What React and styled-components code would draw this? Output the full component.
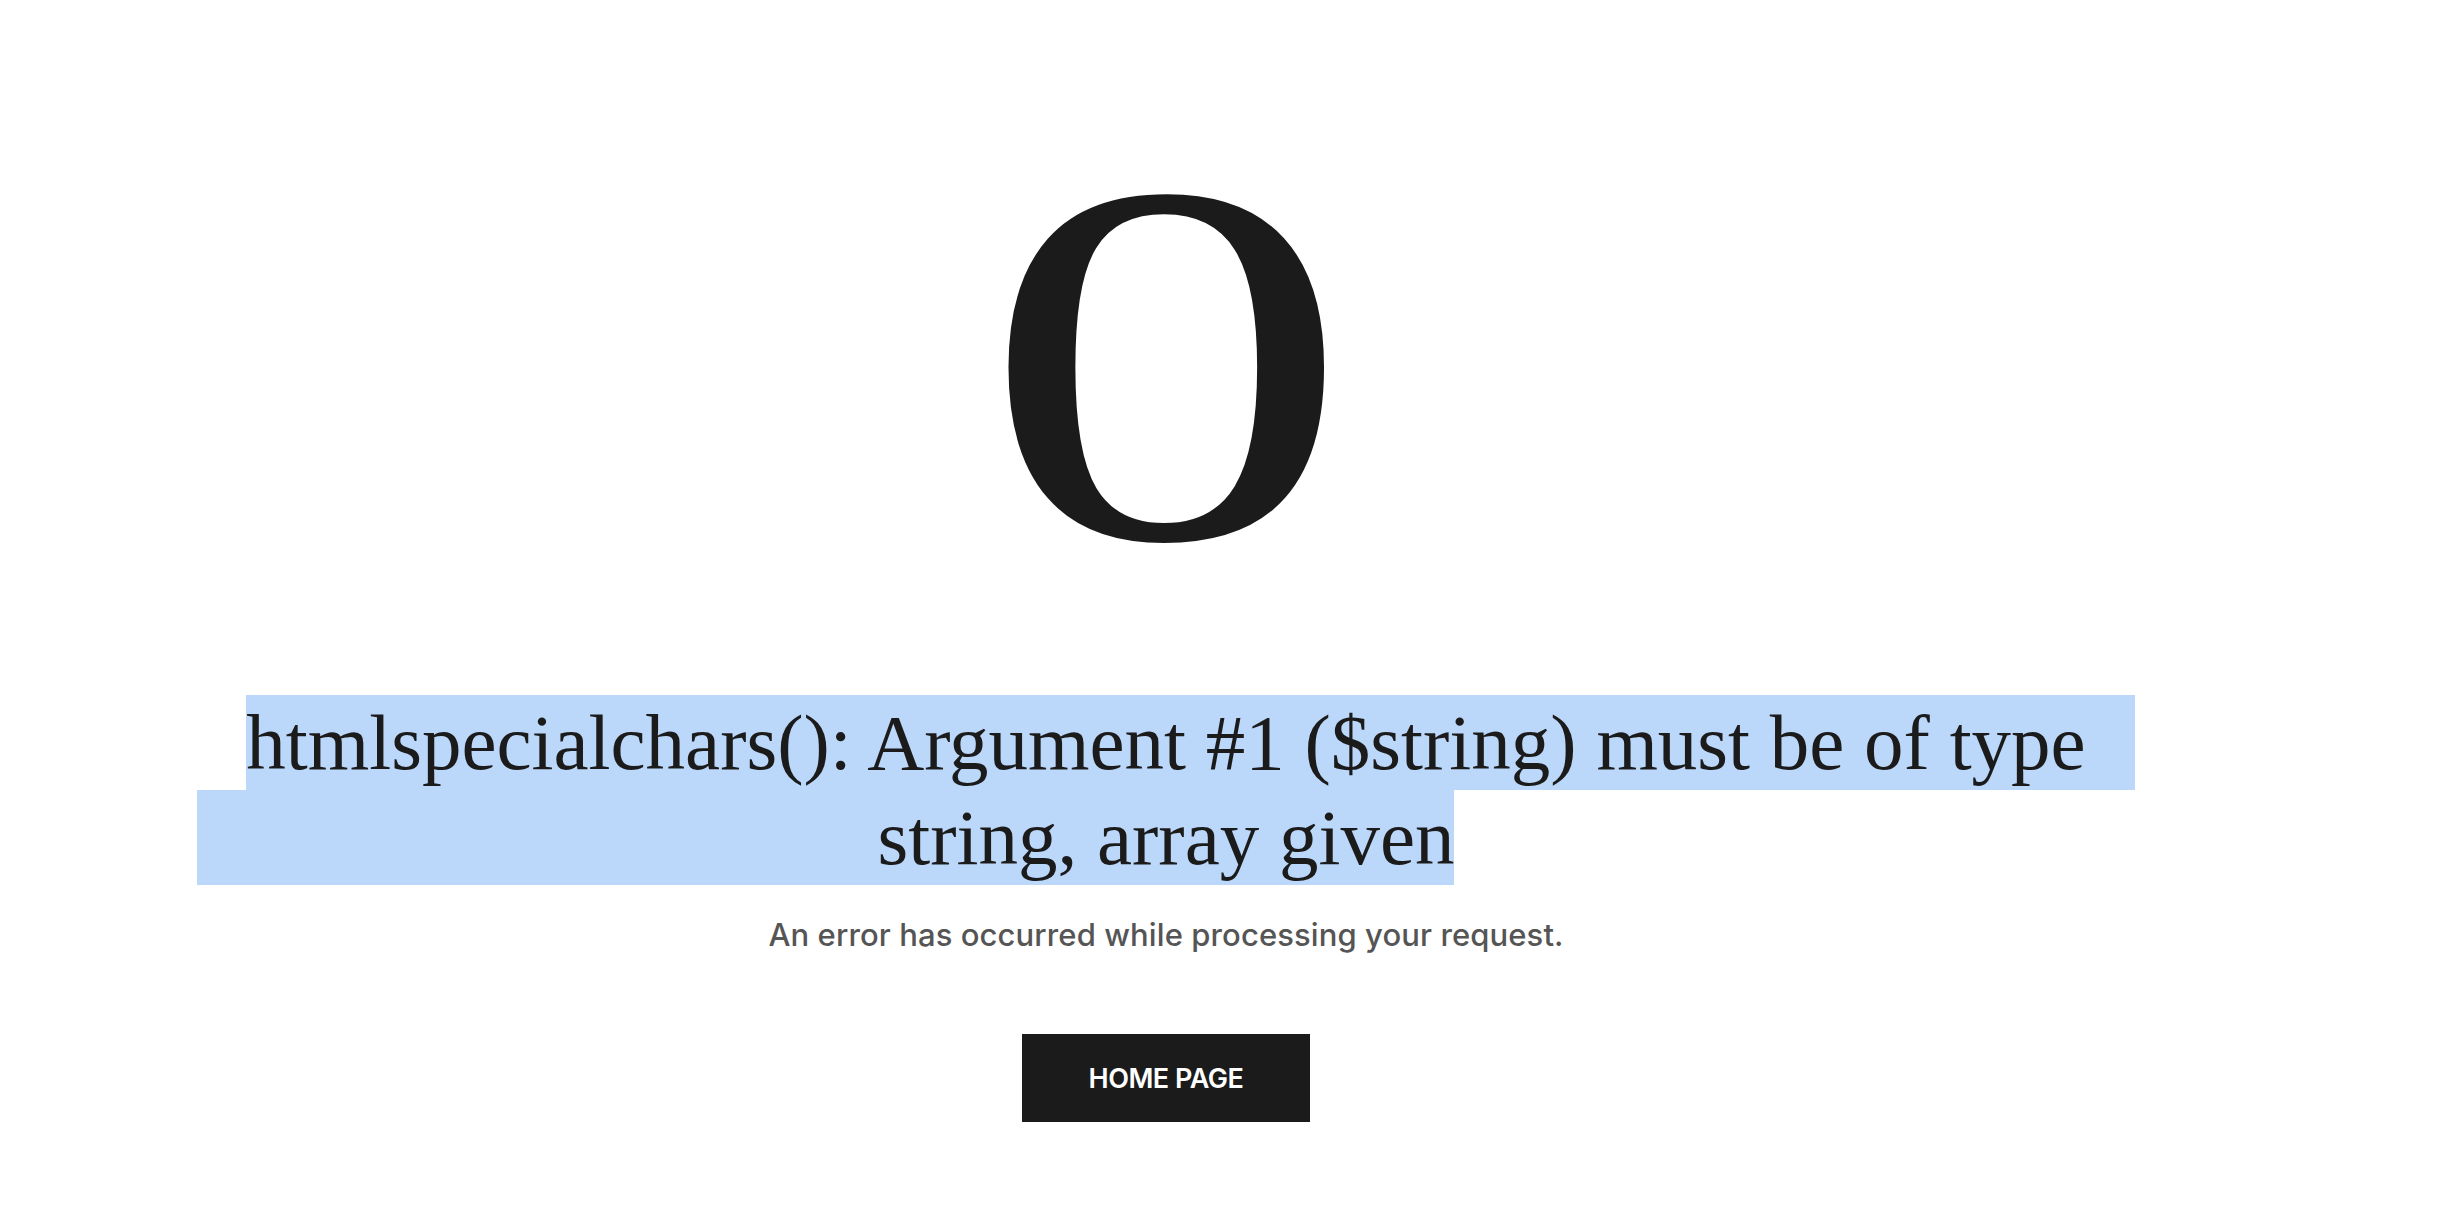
import React from 'react'
import styled, { createGlobalStyle } from 'styled-components'

const GlobalStyle = createGlobalStyle`
  html, body {
    margin: 0;
    padding: 0;
    background: #fff;
  }

  body {
    font-family: "Liberation Serif", serif;
    color: #1b1b1b;
  }
`

const Page = styled.main`
  display: flex;
  flex-direction: column;
  align-items: center;
  box-sizing: border-box;
  width: 100%;
  min-height: 100vh;
  padding: 105px 124px 80px 0;
`

const Code = styled.div`
  font-family: "Liberation Serif", serif;
  font-size: 517px;
  line-height: 517px;
  height: 517px;
  color: #1b1b1b;
  transform: scaleX(1.44);
`

const Title = styled.h1`
  box-sizing: border-box;
  width: 100%;
  margin: 73px 0 0;
  padding: 0 197px;
  font-family: "Liberation Serif", serif;
  font-size: 79px;
  font-weight: 400;
  line-height: 95px;
  color: #1b1b1b;
`

// one wrapped line of the heading, painted as the browser paints a selection
// that starts at the first character and runs past the end of the line
const Line = styled.span`
  display: flex;
  height: 95px;
  white-space: pre;

  &::before,
  &::after {
    content: '';
    flex: 1;
  }

  &::before {
    background: ${(p) => (p.$first ? 'transparent' : '#bbd7fa')};
  }

  &::after {
    background: ${(p) => (p.$first ? '#bbd7fa' : 'transparent')};
  }
`

const Selected = styled.span`
  background: #bbd7fa;
`

const Message = styled.p`
  margin: 30px 0 0;
  font-family: Inter, "Liberation Sans", sans-serif;
  font-size: 31px;
  font-weight: 500;
  line-height: 40px;
  color: #555;
  letter-spacing: 0.1px;
`

const HomeButton = styled.a`
  display: flex;
  align-items: center;
  justify-content: center;
  width: 288px;
  height: 88px;
  margin-top: 79px;
  background: #1b1b1b;
  color: #fff;
  font-family: Inter, "Liberation Sans", sans-serif;
  font-size: 27px;
  font-weight: 600;
  letter-spacing: -0.5px;
  text-decoration: none;
  text-transform: uppercase;
`

const App = () => {
  return (
    <>
      <GlobalStyle />
      <Page>
        <Code>0</Code>
        <Title>
          <Line $first>
            <Selected>htmlspecialchars(): Argument #1 ($string) must be of type</Selected>
          </Line>
          <Line>
            <Selected>string, array given</Selected>
          </Line>
        </Title>
        <Message>An error has occurred while processing your request.</Message>
        <HomeButton href="#">Home page</HomeButton>
      </Page>
    </>
  )
}

export default App
